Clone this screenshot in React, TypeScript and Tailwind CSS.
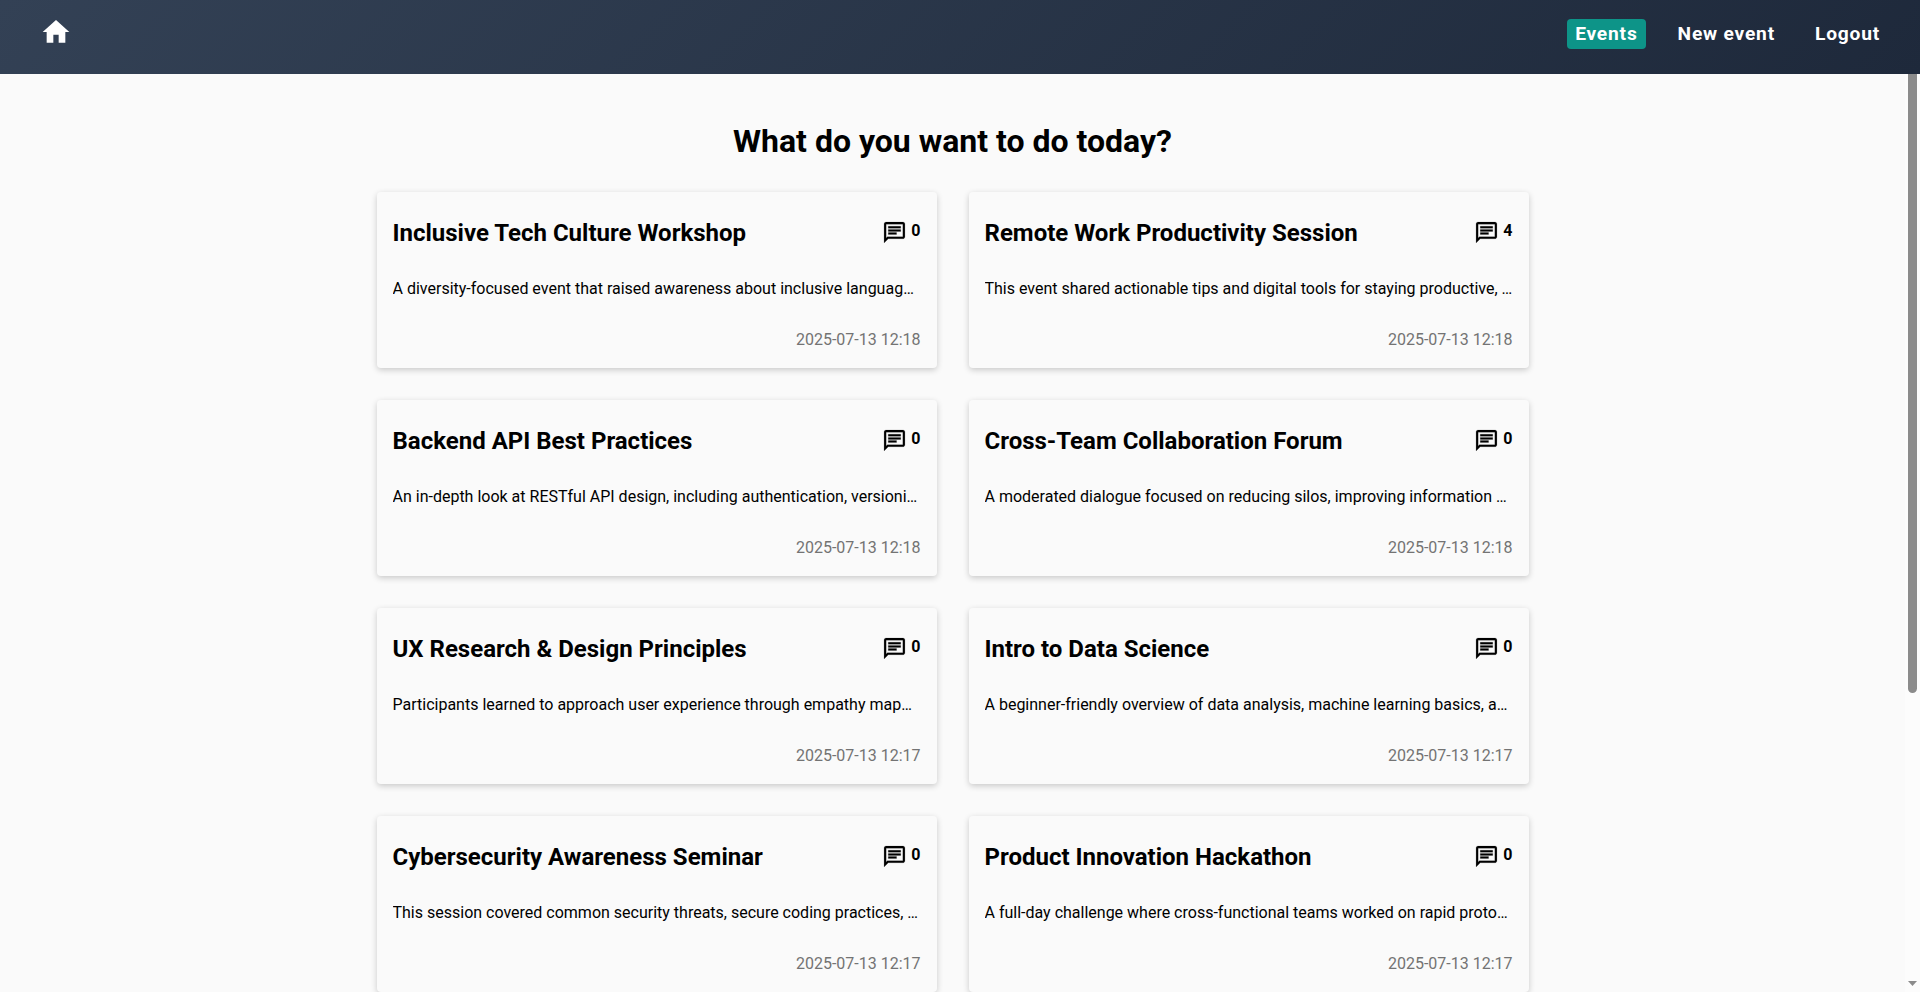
import { MdHome, MdOutlineChat } from "react-icons/md";

interface EventItem {
  title: string;
  description: string;
  comments: number;
  date: string;
}

const events: EventItem[] = [
  {
    title: "Inclusive Tech Culture Workshop",
    description: "A diversity-focused event that raised awareness about inclusive languag…",
    comments: 0,
    date: "2025-07-13 12:18",
  },
  {
    title: "Remote Work Productivity Session",
    description: "This event shared actionable tips and digital tools for staying productive, …",
    comments: 4,
    date: "2025-07-13 12:18",
  },
  {
    title: "Backend API Best Practices",
    description: "An in-depth look at RESTful API design, including authentication, versioni…",
    comments: 0,
    date: "2025-07-13 12:18",
  },
  {
    title: "Cross-Team Collaboration Forum",
    description: "A moderated dialogue focused on reducing silos, improving information …",
    comments: 0,
    date: "2025-07-13 12:18",
  },
  {
    title: "UX Research & Design Principles",
    description: "Participants learned to approach user experience through empathy map…",
    comments: 0,
    date: "2025-07-13 12:17",
  },
  {
    title: "Intro to Data Science",
    description: "A beginner-friendly overview of data analysis, machine learning basics, a…",
    comments: 0,
    date: "2025-07-13 12:17",
  },
  {
    title: "Cybersecurity Awareness Seminar",
    description: "This session covered common security threats, secure coding practices, …",
    comments: 0,
    date: "2025-07-13 12:17",
  },
  {
    title: "Product Innovation Hackathon",
    description: "A full-day challenge where cross-functional teams worked on rapid proto…",
    comments: 0,
    date: "2025-07-13 12:17",
  },
];

function Header() {
  return (
    <header className="flex h-[74px] shrink-0 items-start justify-between bg-[linear-gradient(135deg,#334155,#1e293b)] px-8 text-white">
      <a href="#" aria-label="Home" className="ml-2 mt-4">
        <MdHome className="size-8" />
      </a>
      <nav className="mt-[19px] flex gap-6 text-[19.2px] leading-[30px] font-bold tracking-[0.8px]">
        <a href="#" className="rounded bg-[#0d9488] px-2">Events</a>
        <a href="#" className="px-2">New event</a>
        <a href="#" className="px-2">Logout</a>
      </nav>
    </header>
  );
}

function EventCard({ event }: { event: EventItem }) {
  return (
    <article className="flex h-44 min-w-0 flex-col rounded bg-[#fafafa] px-4 shadow-[0_2px_6px_rgba(0,0,0,0.2)]">
      <div className="mt-6 flex items-start justify-between">
        <h2 className="mt-px text-2xl leading-8 font-bold">{event.title}</h2>
        <div className="flex gap-1">
          <MdOutlineChat className="mt-1 size-[25px] [&_path]:stroke-[0.15] [&_path:last-child]:stroke-black [&_path:first-child]:stroke-none" />
          <span className="leading-[30px] font-bold">{event.comments}</span>
        </div>
      </div>
      <p className="mt-7 truncate leading-6">{event.description}</p>
      <time className="mt-[27px] self-end leading-6 text-[#737373]">{event.date}</time>
    </article>
  );
}

function Scrollbar() {
  return (
    <div className="flex w-[15px] shrink-0 flex-col items-center justify-between bg-[#fcfcfc]">
      <div className="mr-px h-[619px] w-[9px] rounded-b-full bg-[#8b8b8b]" />
      <svg viewBox="0 0 9 5" className="mb-[6px] h-[5px] w-[9px]" fill="#8b8b8b">
        <path d="M0 0h9L4.5 5z" />
      </svg>
    </div>
  );
}

export default function App() {
  return (
    <div className="flex h-[992px] flex-col overflow-hidden bg-[#fafafa] font-['Roboto',sans-serif] text-base text-black">
      <Header />
      <div className="flex min-h-0 flex-1">
        <main className="min-w-0 flex-1 overflow-hidden">
          <h1 className="mt-[47px] text-center text-[32px] leading-10 font-bold">What do you want to do today?</h1>
          <div className="mx-auto mt-[31px] grid w-full max-w-6xl grid-cols-2 gap-8">
            {events.map((event) => (
              <EventCard key={event.title} event={event} />
            ))}
          </div>
        </main>
        <Scrollbar />
      </div>
    </div>
  );
}
